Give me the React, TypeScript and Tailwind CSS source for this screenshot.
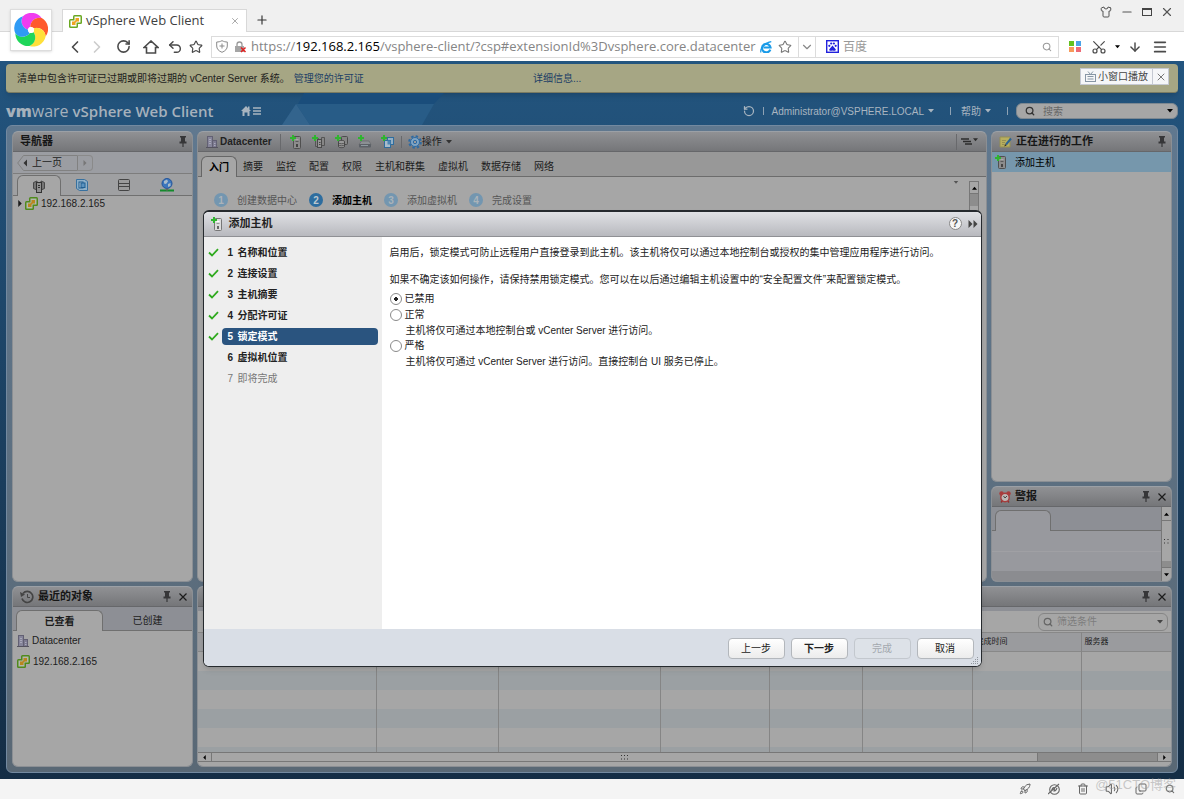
import type { ReactNode } from "react";
import {
  ArrowDown,
  ChevronDown,
  ChevronLeft,
  ChevronRight,
  Copy,
  Menu,
  Minus,
  Plus,
  Rocket,
  RotateCw,
  Scissors,
  Search,
  Shirt,
  Star,
  Trash2,
  Undo2,
  Volume2,
  X,
} from "lucide-react";

const PETALS = ["#f03cf0", "#ff5a2c", "#ffe03a", "#1fd65a", "#2f9bf5"];

const WIZARD_STEPS = [
  { label: "名称和位置", state: "done" },
  { label: "连接设置", state: "done" },
  { label: "主机摘要", state: "done" },
  { label: "分配许可证", state: "done" },
  { label: "锁定模式", state: "current" },
  { label: "虚拟机位置", state: "next" },
  { label: "即将完成", state: "disabled" },
];

const TABS = ["摘要", "监控", "配置", "权限", "主机和群集", "虚拟机", "数据存储", "网络"];

const GUIDE = ["创建数据中心", "添加主机", "添加虚拟机", "完成设置"];

const COLUMNS = ["", "", "", "", "", "", "完成时间", "服务器"];

/* ---------- icons ---------- */

function SwirlLogo() {
  return (
    <svg viewBox="-17 -17 34 34" className="size-[34px]">
      {PETALS.map((color, i) => (
        <path
          key={color}
          transform={`rotate(${i * 72 - 30})`}
          d="M0 -16A12.500 12.500 0 0 1 15.200 -4.900A9 9 0 0 0 1.100 -3.300L-2.800 -2A9 9 0 0 1 0 -16Z"
          fill={color}
        />
      ))}
      <circle r="3" fill="#fff" />
    </svg>
  );
}

function VCenterIcon({ dim = false }: { dim?: boolean }) {
  return (
    <svg viewBox="0 0 13 13" className="size-[13px] shrink-0">
      <rect x="4" y="0" width="9" height="9" rx="1.500" fill={dim ? "#4f8a1c" : "#6aa822"} />
      <rect x="0" y="4" width="9" height="9" rx="1.500" fill={dim ? "#4f8a1c" : "#6aa822"} />
      <rect x="5.500" y="1.500" width="6" height="6" fill={dim ? "#b4b8ac" : "#fff"} />
      <rect x="1.500" y="5.500" width="6" height="6" fill={dim ? "#b4b8ac" : "#fff"} />
      <rect x="6.500" y="3" width="3.500" height="3.500" fill={dim ? "#b8861f" : "#eea320"} />
      <rect x="3" y="6.500" width="3.500" height="3.500" fill={dim ? "#b8861f" : "#eea320"} />
      <path d="M5.500 7.500l2-2" stroke={dim ? "#b8861f" : "#eea320"} strokeWidth="1.500" />
    </svg>
  );
}

function BuildingIcon() {
  return (
    <svg viewBox="0 0 12 13" className="h-[13px] w-3 shrink-0">
      <rect x="1.500" y="1.500" width="5" height="11" fill="#86859a" stroke="#626073" />
      <rect x="6.500" y="5.500" width="4" height="7" fill="#7c7a90" stroke="#626073" />
      <path d="M0 12.500h12" stroke="#55535f" />
      <path d="M3 4.500h2M3 6.500h2M3 8.500h2M8 8.500h1.500M8 10.500h1.500" stroke="#a9a8ba" />
    </svg>
  );
}

function GreenPlus() {
  return <path d="M2 0h2v2h2v2H4v2H2V4H0V2h2z" fill="#2fb52f" />;
}

function HostAddIcon({ light = false }: { light?: boolean }) {
  return (
    <svg viewBox="0 0 12 14" className="h-3.5 w-3 shrink-0">
      <rect x="3.500" y="1.500" width="7" height="12" rx="1" fill={light ? "#dcdcdc" : "#8c8c8c"} stroke={light ? "#777" : "#505050"} />
      <path d="M5.500 4.500h3" stroke={light ? "#fff" : "#aaa"} />
      <path d="M5.500 6.500h3" stroke={light ? "#999" : "#5a5a5a"} />
      <rect x="6" y="9" width="2" height="3" fill={light ? "#666" : "#444"} />
      <GreenPlus />
    </svg>
  );
}

function ClusterAddIcon() {
  return (
    <svg viewBox="0 0 14 14" className="size-3.5">
      <path d="M3.500 3.500h3v8h-3zM9.500 2.500h3v8h-3z" fill="#858585" stroke="#555" />
      <rect x="5.500" y="4.500" width="4" height="8" fill="#959595" stroke="#4a4a4a" />
      <path d="M7 7.500h1.500M7 9.500h1.500" stroke="#444" />
      <GreenPlus />
    </svg>
  );
}

function DatastoreAddIcon() {
  return (
    <svg viewBox="0 0 14 14" className="size-3.5">
      <rect x="6.500" y="1.500" width="6" height="8" rx="1" fill="#858585" stroke="#4c4c4c" />
      <path d="M3.500 6.500c0-1.500 6-1.500 6 0v5c0 1.500-6 1.500-6 0z" fill="#999" stroke="#444" />
      <path d="M3.500 8c1 1 5 1 6 0M3.500 10c1 1 5 1 6 0" fill="none" stroke="#555" />
      <GreenPlus />
    </svg>
  );
}

function DiskAddIcon() {
  return (
    <svg viewBox="0 0 14 14" className="size-3.5">
      <path d="M1 9.500L3.500 6H11l2 3.500z" fill="#8b8f93" stroke="#5f6367" strokeWidth=".6" />
      <rect x="1" y="9" width="12" height="3.500" rx="1" fill="#5c6167" />
      <path d="M3 10.500h7" stroke="#8e989f" />
      <GreenPlus />
    </svg>
  );
}

function VmAddIcon() {
  return (
    <svg viewBox="0 0 14 14" className="size-3.5">
      <rect x="6.500" y="2.500" width="6" height="7" fill="#93afc5" stroke="#2f6d9e" />
      <rect x="3.500" y="5.500" width="6" height="7" fill="#a9bccb" stroke="#2f6d9e" />
      <rect x="6.500" y="5.500" width="3" height="4" fill="#4a86b6" />
      <GreenPlus />
    </svg>
  );
}

function GearIcon() {
  return (
    <svg viewBox="0 0 14 14" className="size-3.5">
      <circle cx="7" cy="7" r="5.800" fill="none" stroke="#2d6aa3" strokeWidth="2" strokeDasharray="2.400 2.150" />
      <circle cx="7" cy="7" r="4.500" fill="#7fa5c6" stroke="#2d6aa3" />
      <circle cx="7" cy="7" r="1.700" fill="#9c9c9c" stroke="#2d6aa3" />
    </svg>
  );
}

function PinIcon() {
  return (
    <svg viewBox="0 0 8 11" className="h-[11px] w-2">
      <path d="M1 0h6v1.500H6V5.500h1.500V7.500H.5V5.500H2V1.500H1z" fill="#363638" />
      <path d="M4 7v4" stroke="#363638" strokeWidth="1.200" />
    </svg>
  );
}

function CloseIcon() {
  return (
    <svg viewBox="0 0 8 8" className="size-2">
      <path d="M.5.5l7 7M7.500.5l-7 7" stroke="#1c1c1c" strokeWidth="1.200" />
    </svg>
  );
}

function HistoryIcon() {
  return (
    <svg viewBox="0 0 14 14" className="size-3.5">
      <path d="M3 3.500a5.500 5.500 0 1 1-1 5" fill="none" stroke="#444" strokeWidth="1.700" />
      <path d="M0 2l1 5 4-2.500z" fill="#444" />
      <path d="M7.500 4v3.500H10" fill="none" stroke="#444" />
    </svg>
  );
}

function NoteIcon() {
  return (
    <svg viewBox="0 0 13 12" className="h-3 w-[13px]">
      <path d="M1 1h10v10H1z" fill="#b8af5e" stroke="#958f52" />
      <path d="M3 4.500h4M3 6.500h3M3 8.500h2" stroke="#958f52" />
      <path d="M12 2.500L7 8.500" stroke="#2c6494" strokeWidth="2" />
      <path d="M5.500 10.500l.4-2.400 1.700 1.200z" fill="#222" />
    </svg>
  );
}

function AlarmIcon() {
  return (
    <svg viewBox="0 0 12 12" className="size-3">
      <circle cx="2.500" cy="2.500" r="2.200" fill="#a83c3c" />
      <circle cx="9.500" cy="2.500" r="2.200" fill="#a83c3c" />
      <path d="M2 11.500l1.500-2M10 11.500l-1.500-2" stroke="#8f3434" strokeWidth="1.500" />
      <circle cx="6" cy="6.500" r="4.200" fill="#bdb8b6" stroke="#a83c3c" strokeWidth="1.400" />
      <path d="M4.500 5L6 7l2-2" fill="none" stroke="#444" />
    </svg>
  );
}

function HostsTabIcon() {
  return (
    <svg viewBox="0 0 12 13" className="h-[13px] w-3">
      <path d="M.5 2.500L4 1v9L.5 8.500zM11.500 2.500L8 1v9l3.500-1.500z" fill="#757575" stroke="#484848" />
      <rect x="3.500" y="2.500" width="5" height="10" fill="#8f8f8f" stroke="#333" />
      <path d="M5 5.500h2M5 7.500h2" stroke="#333" />
    </svg>
  );
}

function VmsTabIcon() {
  return (
    <svg viewBox="0 0 12 12" className="size-3">
      <path d="M.5.5h8l3 2v9h-8l-3-2z" fill="#8fb0c8" stroke="#38719f" />
      <rect x="3" y="3" width="4" height="6" fill="#aec3d2" stroke="#215f91" />
      <rect x="5" y="4" width="4" height="4.500" fill="#5b93bf" stroke="#215f91" />
    </svg>
  );
}

function StorageTabIcon() {
  return (
    <svg viewBox="0 0 12 12" className="size-3">
      <rect x=".5" y=".5" width="11" height="11" rx="1" fill="#9a9a9a" stroke="#444" />
      <path d="M1 4.500h10M1 7.500h10" stroke="#444" />
    </svg>
  );
}

function NetworkTabIcon() {
  return (
    <svg viewBox="0 0 14 14" className="size-3.5">
      <circle cx="7" cy="5.500" r="5" fill="#3b76bd" stroke="#24559a" />
      <path d="M4 3l3-1.500 1 2-2 2.500-2-.5zM8 6l2.500-1v3L8 9z" fill="#a9bccb" />
      <path d="M0 12.500h14" stroke="#138a2b" strokeWidth="2" />
      <path d="M7 10.500v2" stroke="#666" strokeWidth="2" />
    </svg>
  );
}

function CheckIcon() {
  return (
    <svg viewBox="0 0 11 9" className="h-[9px] w-[11px]">
      <path d="M1 4.500l3 3L10 1.200" fill="none" stroke="#2faa1e" strokeWidth="1.800" />
    </svg>
  );
}

function Caret({ className }: { className: string }) {
  return (
    <svg viewBox="0 0 6 4" className={className}>
      <path d="M0 0h6L3 3.500z" fill="currentColor" />
    </svg>
  );
}

function SideArrow({ className }: { className: string }) {
  return (
    <svg viewBox="0 0 4 8" className={className}>
      <path d="M0 0v8l4-4z" fill="currentColor" />
    </svg>
  );
}

/* ---------- browser chrome ---------- */

function BrowserChrome() {
  return (
    <header className="relative shrink-0 font-['Open_Sans','Noto_Sans_CJK_SC',sans-serif]">
      <div className="flex h-8 items-end border-b border-[#d8d8d8] bg-[#f0f0f0] pl-[62px]">
        <div className="-mb-px flex h-[23px] w-[185px] items-center gap-1 border border-b-0 border-[#d8d8d8] bg-white px-1.5 text-[13px] text-[#3f3f3f]">
          <VCenterIcon />
          <span className="flex-1 whitespace-nowrap">vSphere Web Client</span>
          <button aria-label="关闭标签页">
            <X className="size-2.5 text-[#999]" strokeWidth={2} />
          </button>
        </div>
        <button aria-label="新标签页" className="mb-1 ml-2">
          <Plus className="size-3.5 text-[#333]" strokeWidth={2} />
        </button>
        <div className="mb-3 ml-auto flex items-center gap-2 pr-2.5 text-[#555]">
          <button aria-label="皮肤"><Shirt className="size-3" strokeWidth={2} /></button>
          <button aria-label="最小化"><Minus className="size-3.5" strokeWidth={2} /></button>
          <button aria-label="最大化" className="h-2 w-2.5 border border-t-2 border-[#444]" />
          <button aria-label="关闭"><X className="size-3.5" strokeWidth={2} /></button>
        </div>
      </div>

      <div className="flex h-[29px] items-center bg-white pl-[67px] text-[#4a4a4a]">
        <nav className="flex items-center gap-1.5">
          <button aria-label="后退" className="w-4"><ChevronLeft className="-ml-0.5 size-5" strokeWidth={2} /></button>
          <button aria-label="前进" className="w-4"><ChevronRight className="-ml-0.5 size-5 text-[#ccc]" strokeWidth={2} /></button>
          <button aria-label="刷新" className="flex w-6 justify-center"><RotateCw className="size-[15px]" strokeWidth={2.500} /></button>
          <button aria-label="主页" className="flex w-5 justify-center">
            <svg viewBox="0 0 16 14" className="h-3.5 w-4" fill="none" stroke="currentColor" strokeWidth="1.600">
              <path d="M1 7.500L8 1l7 6.500H12.500V13h-9V7.500z" />
            </svg>
          </button>
          <button aria-label="撤销" className="w-4"><Undo2 className="size-4" strokeWidth={2.200} /></button>
          <button aria-label="收藏夹" className="w-4"><Star className="size-3.5" strokeWidth={2} /></button>
        </nav>

        <div className="ml-1.5 flex h-[22px] min-w-0 flex-1 items-center border border-[#dcdcdc]">
          <div className="flex min-w-0 flex-1 items-center pl-1">
            <svg viewBox="0 0 12 13" className="h-[13px] w-3 shrink-0" fill="none" stroke="#8a8a8a">
              <path d="M6 .7c2 1 3.500 1.300 5.300 1.300v4c0 3-2 5-5.300 6.300C2.700 11 .7 9 .7 6V2C2.500 2 4 1.700 6 .7zM6 3.500v5M3.500 6h5" />
            </svg>
            <svg viewBox="0 0 13 12" className="mr-1 ml-1.5 h-3 w-[13px] shrink-0">
              <path d="M3 5V3.500a2.500 2.500 0 0 1 5 0V5" fill="none" stroke="#999" strokeWidth="1.300" />
              <rect x="1" y="5" width="9" height="6" fill="#a5a5a5" />
              <path d="M7 6.500l4.500 4.500M11.500 6.500L7 11" stroke="#e02020" strokeWidth="1.500" />
            </svg>
            <div className="min-w-0 flex-1 overflow-hidden text-[13px] whitespace-nowrap text-[#858585]">
              https://<span className="text-black">192.168.2.165</span>/vsphere-client/?csp#extensionId%3Dvsphere.core.datacenter
            </div>
            <svg viewBox="0 0 12 12" className="size-3 shrink-0">
              <path d="M10.300 8.600A4.300 4.300 0 1 1 10.500 6.500H3.500" fill="none" stroke="#1a9be8" strokeWidth="2.200" />
              <path d="M1 11.500C-.5 8 5 1.500 11.300.7" fill="none" stroke="#1a9be8" strokeWidth="1.200" />
            </svg>
            <Star className="mx-1.5 size-3.5 shrink-0 text-[#777]" strokeWidth={1.800} />
            <button aria-label="地址列表" className="flex h-5 w-[18px] shrink-0 items-center justify-center border-x border-[#dcdcdc]">
              <ChevronDown className="size-3.5 text-[#888]" strokeWidth={2} />
            </button>
          </div>
          <div className="flex w-[242px] shrink-0 items-center gap-1 pr-1.5 pl-2.5">
            <svg viewBox="0 0 13 13" className="size-[13px] shrink-0">
              <rect x=".7" y=".7" width="11.600" height="11.600" fill="#fff" stroke="#2222dd" strokeWidth="1.400" />
              <circle cx="3.300" cy="5.800" r="1.100" fill="#2222dd" />
              <circle cx="5.200" cy="3.500" r="1.100" fill="#2222dd" />
              <circle cx="7.900" cy="3.500" r="1.100" fill="#2222dd" />
              <circle cx="9.700" cy="5.800" r="1.100" fill="#2222dd" />
              <path d="M6.500 5.500L9.700 9.300c.5 1.500-1.200 1.700-3.200 1.300-2 .4-3.700.2-3.200-1.300z" fill="#2222dd" />
            </svg>
            <input aria-label="百度搜索" placeholder="百度" className="min-w-0 flex-1 text-xs outline-none placeholder:text-[#999]" />
            <Search className="size-2.5 shrink-0 text-[#999]" strokeWidth={2.500} />
          </div>
        </div>

        <div className="ml-2.5 flex items-center gap-2.5 pr-4">
          <button aria-label="应用" className="grid size-3 grid-cols-2 gap-px">
            <span className="size-[5px] bg-[#63c11f]" />
            <span className="size-[5px] bg-[#4ba3e8]" />
            <span className="size-[5px] bg-[#f79a5a]" />
            <span className="size-[5px] bg-[#ee6a76]" />
          </button>
          <div className="flex items-center gap-2">
            <button aria-label="截图"><Scissors className="size-4 -rotate-90" strokeWidth={1.800} /></button>
            <Caret className="h-1 w-[5px] text-black" />
            <button aria-label="下载"><ArrowDown className="size-3.5" strokeWidth={2.500} /></button>
          </div>
          <button aria-label="菜单">
            <Menu className="size-4" strokeWidth={2.500} />
          </button>
        </div>
      </div>

      {/* Browser badge, straddles the tab strip and the toolbar */}
      <div className="absolute top-[9px] left-2.5 flex h-[42px] w-[42px] items-center justify-center border border-[#ddd] bg-white shadow-sm">
        <SwirlLogo />
      </div>
    </header>
  );
}

function StatusBar() {
  return (
    <footer className="relative flex h-5 shrink-0 items-center justify-end gap-[13px] bg-[#f4f4f4] pr-1.5 text-[#666]">
      <button aria-label="加速" className="flex w-4 justify-center"><Rocket className="size-3" strokeWidth={2} /></button>
      <button aria-label="浏览器医生" className="flex w-4 justify-center">
        <svg viewBox="0 0 12 12" className="size-3" fill="none" stroke="currentColor" strokeWidth="1.100">
          <circle cx="6.500" cy="6.500" r="4.800" />
          <path d="M0 11L11 1M3.500 7.500C5 3 7.500 4 6 8c2 0 2.500-1.500 3-3" />
        </svg>
      </button>
      <button aria-label="清理" className="flex w-4 justify-center"><Trash2 className="size-3" strokeWidth={2} /></button>
      <button aria-label="声音" className="flex w-4 justify-center"><Volume2 className="size-3.5" strokeWidth={1.800} /></button>
      <button aria-label="窗口" className="flex w-4 justify-center"><Copy className="size-3 -scale-y-100" strokeWidth={2} /></button>
      <button aria-label="缩放" className="flex w-4 justify-center"><Search className="size-2.5" strokeWidth={2.500} /></button>
      <span className="pointer-events-none absolute right-2 bottom-1 text-[13px] leading-5 text-[#999]/50">@51CTO博客</span>
    </footer>
  );
}

/* ---------- vSphere panels ---------- */

function Panel({ className = "", children }: { className?: string; children?: ReactNode }) {
  return (
    <section className={`flex min-h-0 flex-col overflow-hidden rounded-md border border-[#8b8f94] border-t-[#9ba0a6] bg-[#a6a6a6] ${className}`}>
      {children}
    </section>
  );
}

function PanelHeader({ icon, title, closable = false }: { icon?: ReactNode; title?: string; closable?: boolean }) {
  return (
    <div className="flex h-5 shrink-0 items-center gap-1 border-b border-[#66676a] bg-linear-to-b from-[#909194] to-[#757679] pr-[5px] pl-[7px]">
      {icon}
      <h2 className="flex-1 text-[11px] font-bold text-[#161616]">{title}</h2>
      <button aria-label="固定"><PinIcon /></button>
      {closable && <button aria-label="关闭面板" className="ml-1"><CloseIcon /></button>}
    </div>
  );
}

function Navigator() {
  return (
    <Panel className="flex-1">
      <PanelHeader title="导航器" />
      <div className="flex h-[22px] shrink-0 items-center border-b border-[#7d7d7d] bg-[#9b9da2] px-1">
        <button className="relative flex h-4 w-[61px] items-center pl-[15px] text-[10px] text-[#1c1c1c]">
          <svg viewBox="0 0 61 16" className="absolute inset-0 h-4 w-[61px]">
            <path d="M.7 8L6.500.5h54v15h-54z" fill="none" stroke="#818181" />
            <path d="M10 4.500v7L6.500 8z" fill="#333" />
          </svg>
          上一页
        </button>
        <button aria-label="前进" className="flex h-4 w-[15px] items-center justify-center rounded-r-sm border border-l-0 border-[#8a8a8a] text-[#777]">
          <SideArrow className="h-1.5 w-1" />
        </button>
      </div>
      <div className="flex h-[22px] shrink-0 items-end bg-[#9fa0a2] pt-px">
        <span className="h-full w-1 border-b border-[#707070]" />
        <button aria-label="主机" className="flex h-full w-[44px] items-center justify-center rounded-t-md border border-b-0 border-[#6f6f6f] bg-[#a6a6a6]"><HostsTabIcon /></button>
        <button aria-label="虚拟机" className="flex h-full flex-1 items-center justify-center border-b border-[#707070]"><VmsTabIcon /></button>
        <button aria-label="存储" className="flex h-full flex-1 items-center justify-center border-b border-[#707070]"><StorageTabIcon /></button>
        <button aria-label="网络" className="flex h-full flex-1 items-center justify-center border-b border-[#707070]"><NetworkTabIcon /></button>
        <span className="h-full w-1 border-b border-[#707070]" />
      </div>
      <div className="flex items-center gap-[3px] px-[5px] text-[10px] text-[#1c1c1c]">
        <SideArrow className="h-[7px] w-1" />
        <VCenterIcon dim />
        192.168.2.165
      </div>
    </Panel>
  );
}

function RecentObjects() {
  return (
    <Panel className="w-[181px] shrink-0">
      <PanelHeader title="最近的对象" icon={<HistoryIcon />} closable />
      <div className="flex h-6 shrink-0 items-end bg-[#8d8f95] pt-[3px] text-[10px] text-[#1c1c1c]">
        <span className="h-full w-[3px] border-b border-[#707070]" />
        <button className="h-full w-[87px] rounded-t-md border border-b-0 border-[#6f6f6f] bg-[#a6a6a6] font-bold">已查看</button>
        <button className="h-full flex-1 border-b border-[#707070]">已创建</button>
      </div>
      <ul className="-mt-px px-1 text-[10px] text-[#1c1c1c]">
        <li className="flex h-[21px] items-center gap-[3px]"><BuildingIcon />Datacenter</li>
        <li className="flex h-[21px] items-center gap-[3px]"><VCenterIcon dim />192.168.2.165</li>
      </ul>
    </Panel>
  );
}

function MainPanel() {
  return (
    <Panel className="min-w-0 flex-1">
      <div className="flex h-5 shrink-0 items-center border-b border-[#66676a] bg-linear-to-b from-[#909194] to-[#757679] px-2 text-[10px] text-[#1c1c1c]">
        <BuildingIcon />
        <span className="ml-0.5 font-bold text-[#222]">Datacenter</span>
        <span className="mx-2 h-4 w-px bg-[#68696c]" />
        <div className="flex items-center gap-[9px]">
          <button aria-label="添加主机" className="flex w-3.5 justify-center"><HostAddIcon /></button>
          <button aria-label="新建群集"><ClusterAddIcon /></button>
          <button aria-label="新建数据存储"><DatastoreAddIcon /></button>
          <button aria-label="新建交换机"><DiskAddIcon /></button>
          <button aria-label="新建虚拟机"><VmAddIcon /></button>
        </div>
        <span className="mx-1.5 h-3 w-px bg-[#68696c]" />
        <button className="flex items-center">
          <GearIcon />
          操作
          <Caret className="ml-1 h-1 w-1.5 text-[#333]" />
        </button>
        <button aria-label="布局" className="ml-auto flex h-4 items-center gap-px border-l border-[#68696c] pl-1">
          <svg viewBox="0 0 11 7" className="h-[7px] w-[11px]">
            <path d="M0 1h8M2 3.500h8M4 6h7" stroke="#2c2c2c" strokeWidth="1.300" />
          </svg>
          <Caret className="mb-1 h-1 w-[5px] text-[#2c2c2c]" />
        </button>
      </div>

      <nav className="flex h-[25px] shrink-0 items-end bg-[#989898] pt-1 text-[10px] text-[#1c1c1c]">
        <span className="h-full w-[3px] border-b border-[#6c6c6c]" />
        <button className="h-full w-9 rounded-t-md border border-b-0 border-[#666] bg-[#a6a6a6] font-bold text-black">入门</button>
        <div className="flex h-full flex-1 items-center gap-[13px] border-b border-[#6c6c6c] pl-1.5">
          {TABS.map((tab) => (
            <button key={tab}>{tab}</button>
          ))}
        </div>
      </nav>

      <div className="flex min-h-0 flex-1 justify-between pt-1 pr-[7px]">
        <ol className="flex h-[38px] items-center gap-3 pl-4 text-[10px] text-[#555]">
          {GUIDE.map((label, i) => (
            <li key={label} className="flex items-center gap-[9px]">
              <span
                className={
                  i === 1
                    ? "flex size-3.5 items-center justify-center rounded-full bg-[#2e6d9f] font-bold text-[#bcc6ce]"
                    : "flex size-3.5 items-center justify-center rounded-full bg-[#7396b0] font-bold text-[#abb3b9]"
                }
              >
                {i + 1}
              </span>
              <span className={i === 1 ? "font-bold text-black" : ""}>{label}</span>
            </li>
          ))}
        </ol>
        <div className="flex gap-2">
          <Caret className="h-[3px] w-2.5 text-[#555]" />
          <div className="w-2.5 border border-[#777]">
            <div className="flex h-3 items-center justify-center border-b border-[#777]"><Caret className="h-1 w-[5px] -scale-y-100 text-black" /></div>
            <div className="h-3 bg-[#8d8d8d]" />
          </div>
        </div>
      </div>
    </Panel>
  );
}

function WorkInProgress() {
  return (
    <Panel className="min-h-0 flex-1">
      <PanelHeader title="正在进行的工作" icon={<NoteIcon />} />
      <a href="#add-host" className="flex h-5 items-center gap-2 bg-[#7697ac] px-[3px] text-[10px] text-black">
        <HostAddIcon />
        添加主机
      </a>
    </Panel>
  );
}

function Alarms() {
  return (
    <Panel className="h-24 shrink-0">
      <PanelHeader title="警报" icon={<AlarmIcon />} closable />
      <div className="flex min-h-0 flex-1">
        <div className="flex flex-1 flex-col bg-[#98999e]">
          <div className="flex h-6 bg-[#8d8f95] pt-[3px]">
            <span className="w-[3px] border-b border-[#707070]" />
            <span className="w-14 rounded-t-md border border-b-0 border-[#6f6f6f] bg-[#98999e]" />
            <span className="flex-1 border-b border-[#707070]" />
          </div>
          <div className="mt-5 border-t border-[#a0a0a4]" />
          <div className="mt-auto h-2.5 bg-[#8b8c90]" />
        </div>
        <div className="flex w-2.5 flex-col border-l border-[#777] bg-[#a6a6a6]">
          <div className="flex h-3.5 items-center justify-center border-b border-[#777]"><Caret className="h-1 w-[5px] -scale-y-100 text-black" /></div>
          <div className="flex flex-1 items-center justify-center">
            <svg viewBox="0 0 5 5" className="size-[5px]"><path d="M0 .5h1M3.500.5h1M0 4h1M3.500 4h1" stroke="#333" /></svg>
          </div>
          <div className="h-1.5 bg-[#8d8d8d]" />
          <div className="flex h-3.5 items-center justify-center border-t border-[#777]"><Caret className="h-1 w-[5px] text-black" /></div>
        </div>
      </div>
    </Panel>
  );
}

function TaskPanel() {
  return (
    <Panel className="min-w-0 flex-1">
      <PanelHeader closable />
      <div className="h-1 shrink-0 bg-[#8d8f95]" />
      <div className="flex h-[21px] shrink-0 items-center justify-end pr-[3px]">
        <label className="flex h-[18px] w-[130px] items-center gap-1 rounded-md border border-[#858585] px-1">
          <Search className="size-2.5 text-[#666]" strokeWidth={3} />
          <input aria-label="筛选条件" placeholder="筛选条件" className="min-w-0 flex-1 text-[10px] outline-none placeholder:text-[#7d7d7d]" />
          <Caret className="h-1 w-1.5 text-[#444]" />
        </label>
      </div>
      <div className="min-h-0 flex-1 overflow-hidden">
        <table className="w-full table-fixed border-collapse text-[8px] text-[#1c1c1c]">
          <colgroup>
            <col className="w-[178px]" />
            <col className="w-[122px]" />
            <col className="w-[162px]" />
            <col className="w-[109px]" />
            <col className="w-[93px]" />
            <col className="w-[110px]" />
            <col className="w-[109px]" />
            <col />
          </colgroup>
          <thead>
            <tr className="h-[19px] border-y border-[#888] bg-[#9a9b9e]">
              {COLUMNS.map((name, i) => (
                <th key={i} className="border-r border-[#858585] px-[3px] text-left font-normal last:border-r-0">{name}</th>
              ))}
            </tr>
          </thead>
          <tbody>
            {[0, 1, 2, 3, 4, 5].map((row) => (
              <tr key={row} className="h-[19px] odd:bg-[#a6a6a6] even:bg-[#9ba0a3]">
                {COLUMNS.map((_, i) => (
                  <td key={i} className="border-r border-[#858585] last:border-r-0" />
                ))}
              </tr>
            ))}
          </tbody>
        </table>
      </div>
      <div className="mb-1 flex h-2.5 shrink-0 border-y border-[#777] bg-[#8d8d8d]">
        <span className="flex w-3.5 items-center justify-center border-r border-[#777] bg-[#a6a6a6]"><SideArrow className="h-[5px] w-[3px] rotate-180 text-black" /></span>
        <span className="flex flex-[823] items-center justify-center border-r border-[#777] bg-[#a6a6a6]">
          <svg viewBox="0 0 7 5" className="h-[5px] w-[7px]"><path d="M0 .5h1M3 .5h1M6 .5h1M0 4h1M3 4h1M6 4h1" stroke="#333" /></svg>
        </span>
        <span className="flex-[119]" />
        <span className="flex w-3.5 items-center justify-center border-l border-[#777] bg-[#a6a6a6]"><SideArrow className="h-[5px] w-[3px] text-black" /></span>
      </div>
    </Panel>
  );
}

/* ---------- add host wizard ---------- */

function WizardDialog() {
  const button = "h-[21px] w-[57px] rounded-sm border border-[#b3b7bc] bg-linear-to-b from-white to-[#ececec] text-[10px] text-[#222]";

  return (
    <div
      role="dialog"
      aria-labelledby="wizard-title"
      className="flex h-[457px] w-[779px] flex-col overflow-hidden rounded-md border border-t-2 border-[#262a2e] bg-white text-[10px] text-[#222] shadow-md"
    >
      <div className="flex h-[25px] shrink-0 items-center gap-1.5 border-b border-[#8f9094] bg-linear-to-b from-[#e0e1e5] to-[#b8b9be] pr-[3px] pl-[7px]">
        <HostAddIcon light />
        <h1 id="wizard-title" className="flex-1 text-[11px] font-bold">添加主机</h1>
        <button aria-label="帮助" className="flex size-[13px] items-center justify-center rounded-full border border-[#888] bg-[#f6f6f6] text-[10px] leading-none font-bold text-[#555]">?</button>
        <button aria-label="展开" className="flex text-[#444]">
          <SideArrow className="h-2 w-[5px]" />
          <SideArrow className="h-2 w-[5px]" />
        </button>
      </div>

      <div className="flex min-h-0 flex-1">
        <ol className="w-[178px] shrink-0 bg-[#eee] pt-[5px] pr-1 pl-1">
          {WIZARD_STEPS.map((step, i) => (
            <li key={step.label} className="flex h-[21px] items-center gap-[3px]">
              <span className="w-[11px] shrink-0">{(step.state === "done" || step.state === "current") && <CheckIcon />}</span>
              <span
                className={
                  step.state === "current"
                    ? "flex h-[17px] flex-1 items-center gap-1 rounded-sm bg-[#2a547f] pl-1.5 font-bold text-white"
                    : step.state === "disabled"
                      ? "flex h-[17px] flex-1 items-center gap-1 pl-1.5 text-[#777]"
                      : "flex h-[17px] flex-1 items-center gap-1 pl-1.5 font-bold"
                }
              >
                <span className="w-1.5">{i + 1}</span>
                {step.label}
              </span>
            </li>
          ))}
        </ol>

        <div className="flex-1 px-2 pt-2 leading-[15px]">
          <p>启用后，锁定模式可防止远程用户直接登录到此主机。该主机将仅可以通过本地控制台或授权的集中管理应用程序进行访问。</p>
          <p className="mt-3">如果不确定该如何操作，请保持禁用锁定模式。您可以在以后通过编辑主机设置中的“安全配置文件”来配置锁定模式。</p>
          <fieldset className="mt-1">
            <LockdownOption id="lock-off" label="已禁用" checked />
            <LockdownOption id="lock-normal" label="正常" hint="主机将仅可通过本地控制台或 vCenter Server 进行访问。" />
            <LockdownOption id="lock-strict" label="严格" hint="主机将仅可通过 vCenter Server 进行访问。直接控制台 UI 服务已停止。" />
          </fieldset>
        </div>
      </div>

      <div className="relative flex h-[37px] shrink-0 items-center justify-end gap-1.5 bg-[#d9dee6] pt-0.5 pr-[7px]">
        <button className={button}>上一步</button>
        <button className={`${button} font-bold`}>下一步</button>
        <button disabled className="h-[21px] w-[57px] rounded-sm border border-[#c3c8ce] bg-[#dde2e8] text-[10px] text-[#a3a8ae]">完成</button>
        <button className={button}>取消</button>
        <svg viewBox="0 0 8 8" className="absolute right-0.5 bottom-0.5 size-2">
          <path d="M0 7.500h8M2 5.500h6M4 3.500h4M6 1.500h2" stroke="#9298a0" strokeDasharray="1 1" />
        </svg>
      </div>
    </div>
  );
}

function LockdownOption({ id, label, hint, checked = false }: { id: string; label: string; hint?: string; checked?: boolean }) {
  return (
    <>
      <div className="flex h-4 items-center gap-[3px]">
        <input
          type="radio"
          name="lockdown"
          id={id}
          defaultChecked={checked}
          className="size-3 appearance-none rounded-full border border-[#8a8a8a] bg-white checked:bg-[radial-gradient(circle,#222_0_2px,white_2px)]"
        />
        <label htmlFor={id}>{label}</label>
      </div>
      {hint && <p className="pl-4">{hint}</p>}
    </>
  );
}

/* ---------- page ---------- */

function AppHeader() {
  return (
    <div className="relative flex h-8 items-center pt-1 text-[10px] text-[#a9b5c0]">
      <svg viewBox="0 0 220 32" className="absolute top-0 left-[234px] h-8 w-[220px]">
        <path d="M64 0h140l-10 11H58z" fill="#1a4d7b" />
        <path d="M56 11h138l-12 21H70z" fill="#285c87" />
        <path d="M56 11L42 32h28z" fill="#33648d" />
      </svg>
      <div className="relative flex items-center gap-1 font-['Open_Sans',sans-serif] text-[15px] font-semibold text-[#a6b1bc]">
        <span className="text-base font-extrabold">vm<span className="font-normal">ware</span></span>
        <span>vSphere Web Client</span>
      </div>
      <button aria-label="主页" className="relative ml-7 flex items-center gap-0.5">
        <svg viewBox="0 0 10 10" className="size-2.5">
          <path d="M5 0l5 5H8.500v5h-2V6.500h-3V10h-2V5H0z" fill="currentColor" />
          <path d="M7 .5h1.500v3H7z" fill="currentColor" />
        </svg>
        <svg viewBox="0 0 8 8" className="size-2"><path d="M0 1h8M0 4h8M0 7h8" stroke="currentColor" strokeWidth="1.400" /></svg>
      </button>
      <div className="ml-auto flex items-center">
        <button aria-label="刷新"><RotateCw className="size-3 -scale-x-100" strokeWidth={2.500} /></button>
        <span className="mx-2 h-2 w-px bg-[#8ea2b4]" />
        <button className="flex items-center gap-1">Administrator@VSPHERE.LOCAL<Caret className="h-1 w-1.5" /></button>
        <span className="mr-2.5 ml-4 h-2 w-px bg-[#8ea2b4]" />
        <button className="flex items-center gap-1">帮助<Caret className="h-1 w-1.5" /></button>
        <span className="mr-2 ml-4 h-2 w-px bg-[#8ea2b4]" />
        <label className="flex h-4 w-[162px] items-center gap-2 rounded-md border border-[#7d8891] bg-[#a6a6a6] px-1 pl-2 text-[#333]">
          <Search className="size-2.5" strokeWidth={3} />
          <input aria-label="搜索" placeholder="搜索" className="min-w-0 flex-1 outline-none placeholder:text-[#666]" />
          <Caret className="h-1 w-1.5 text-black" />
        </label>
      </div>
    </div>
  );
}

export default function App() {
  return (
    <div className="flex h-screen min-h-[600px] flex-col overflow-hidden font-['Liberation_Sans','Noto_Sans_CJK_SC',sans-serif]">
      <BrowserChrome />

      <main className="relative flex min-h-0 flex-1 flex-col bg-linear-to-b from-[#23557f] to-[#142d45] px-1.5 pt-[3px] pb-1.5">
        <div className="grid h-[29px] shrink-0 grid-cols-[516px_1fr] items-center rounded-sm border-b border-[#7a7b62] bg-[#a6a684] pl-[11px] text-[10px] text-[#1c1c1c] shadow-md">
          <p>
            清单中包含许可证已过期或即将过期的 vCenter Server 系统。
            <a href="#licenses" className="ml-1 text-[#1d3f66]">管理您的许可证</a>
          </p>
          <a href="#details" className="text-[#1d3f66]">详细信息...</a>
        </div>

        {/* Floating video pop-out control */}
        <div className="absolute top-[7px] right-[15px] flex h-[17px] items-center border border-[#c5c9d2] bg-[#f5f6f8] text-[10px] text-[#444]">
          <button className="flex items-center gap-0.5 px-1">
            <svg viewBox="0 0 11 11" className="size-[11px]" fill="none" stroke="#8796a5">
              <rect x=".5" y="3.500" width="10" height="7" />
              <path d="M3 .5l2.500 3L8 .5M2.500 5.500h6M2.500 8h6" />
            </svg>
            小窗口播放
          </button>
          <button aria-label="关闭小窗口" className="flex h-full w-4 items-center justify-center border-l border-[#c5c9d2]"><X className="size-3 text-[#777]" strokeWidth={2} /></button>
        </div>

        <AppHeader />

        <div className="flex min-h-0 flex-1 flex-col gap-1 rounded-md border border-[#7389a0] bg-linear-to-b from-[#60788f] to-[#596875] p-[5px]">
          <div className="flex min-h-0 flex-1 gap-1">
            <div className="flex w-[181px] shrink-0 flex-col"><Navigator /></div>
            <MainPanel />
            <div className="flex w-[181px] shrink-0 flex-col gap-1">
              <WorkInProgress />
              <Alarms />
            </div>
          </div>
          <div className="flex h-[181px] shrink-0 gap-1">
            <RecentObjects />
            <TaskPanel />
          </div>
        </div>

        <div className="absolute inset-0 flex items-center justify-center pt-9">
          <WizardDialog />
        </div>
      </main>

      <StatusBar />
    </div>
  );
}
